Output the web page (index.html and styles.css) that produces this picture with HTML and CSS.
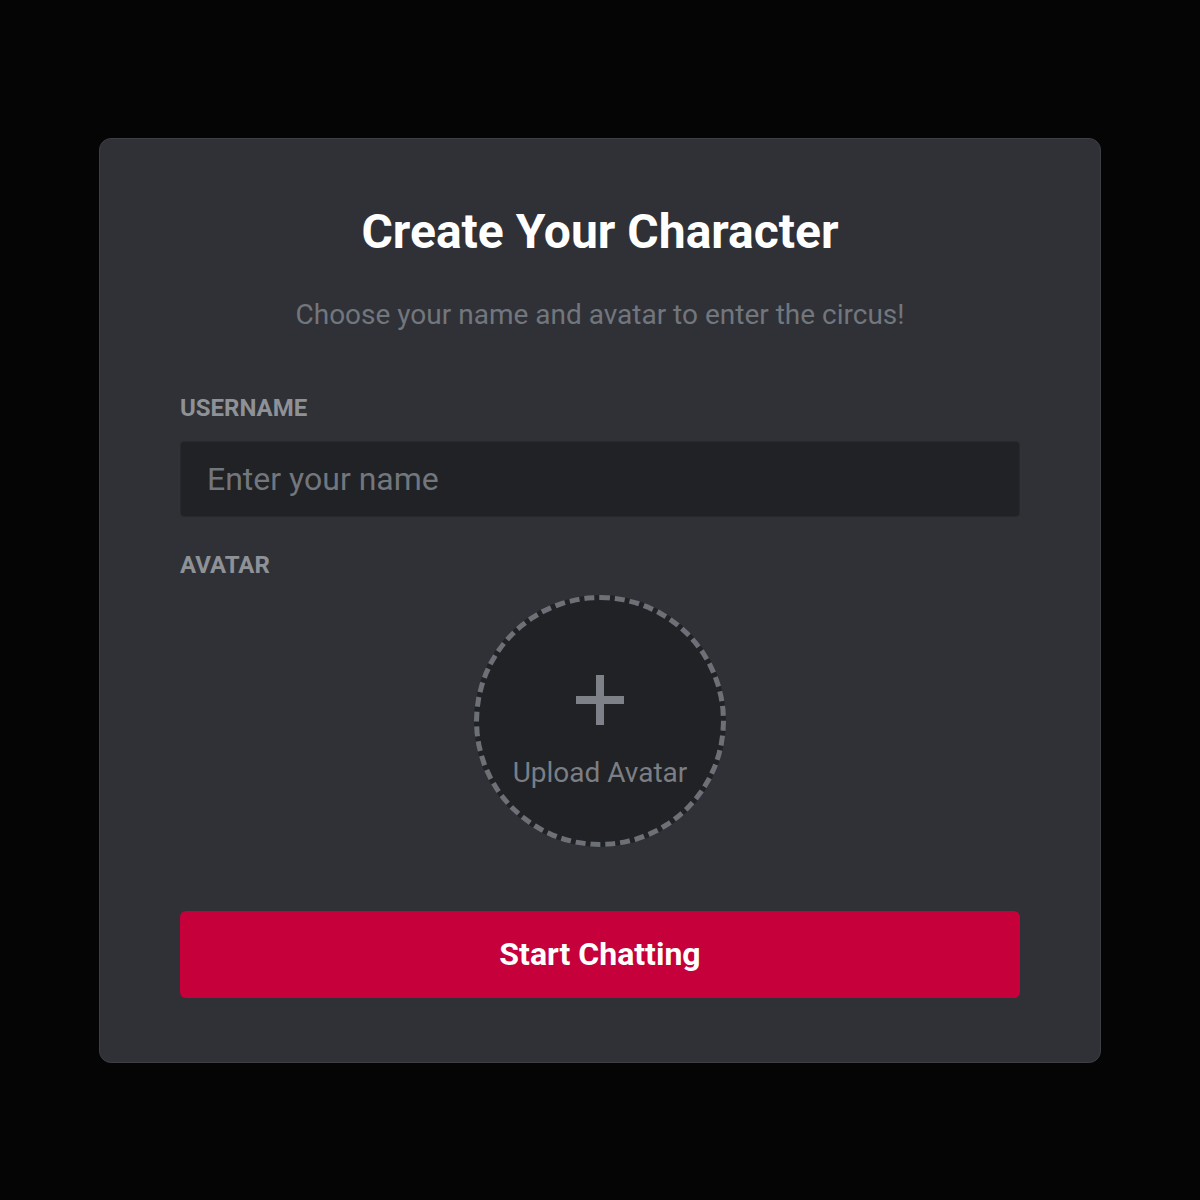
FILE: index.html
```html
<!DOCTYPE html>
<html lang="en">
<head>
<meta charset="utf-8">
<title>Create Your Character</title>
<link rel="stylesheet" href="styles.css">
</head>
<body>
<main class="card">
  <h1 class="title">Create Your Character</h1>
  <p class="subtitle">Choose your name and avatar to enter the circus!</p>
  <label class="label" for="username">USERNAME</label>
  <input class="input" id="username" type="text" placeholder="Enter your name">
  <div class="label label-avatar">AVATAR</div>
  <div class="avatar-row">
    <button class="avatar" type="button">
      <span class="plus" aria-hidden="true"></span>
      <span class="avatar-text">Upload Avatar</span>
    </button>
  </div>
  <button class="submit" type="button">Start Chatting</button>
</main>
</body>
</html>
```
FILE: styles.css
```css
* { box-sizing: border-box; }
html, body { height: 100%; }
body {
  margin: 0;
  background: #050505;
  font-family: Roboto, "Noto Sans", "Liberation Sans", sans-serif;
  display: flex;
  align-items: center;
  justify-content: center;
}
.card {
  width: 1002px;
  background: #2f3136;
  border: 1px solid #3d3f45;
  border-radius: 12px;
  padding: 64px 80px;
  display: flex;
  flex-direction: column;
}
.title {
  margin: 0;
  text-align: center;
  font-size: 48px;
  font-weight: 700;
  color: #ffffff;
}
.subtitle {
  margin: 38px 0 0;
  text-align: center;
  font-size: 28px;
  color: #72767d;
}
.label {
  display: block;
  margin-top: 63px;
  font-size: 24px;
  font-weight: 700;
  color: #8e9297;
}
.label-avatar { margin-top: 34px; }
.input {
  margin-top: 19px;
  width: 100%;
  height: 76px;
  padding: 0 26px;
  background: #202225;
  border: 1px solid #27292d;
  border-radius: 4px;
  font-family: inherit;
  font-size: 32px;
  color: #dcddde;
  outline: none;
}
.input::placeholder { color: #72767d; }
.avatar-row {
  margin-top: 16px;
  display: flex;
  justify-content: center;
}
.avatar {
  width: 252px;
  height: 252px;
  border-radius: 50%;
  border: 5px dashed #6d7076;
  background: #202225;
  padding: 0;
  display: flex;
  flex-direction: column;
  align-items: center;
  justify-content: center;
  cursor: pointer;
  font-family: inherit;
}
.plus {
  position: relative;
  width: 48px;
  height: 50px;
  margin-top: 23px;
}
.plus::before, .plus::after {
  content: "";
  position: absolute;
  background: #7e8187;
}
.plus::before { left: 0; right: 0; top: 21px; height: 8px; }
.plus::after { top: 0; bottom: 0; left: 20px; width: 8px; }
.avatar-text {
  margin-top: 31px;
  font-size: 28px;
  color: #7b7e84;
}
.submit {
  margin-top: 64px;
  height: 87px;
  width: 100%;
  border: none;
  border-radius: 6px;
  background: #c6003a;
  color: #ffffff;
  font-family: inherit;
  font-size: 32px;
  font-weight: 700;
  cursor: pointer;
}
```
